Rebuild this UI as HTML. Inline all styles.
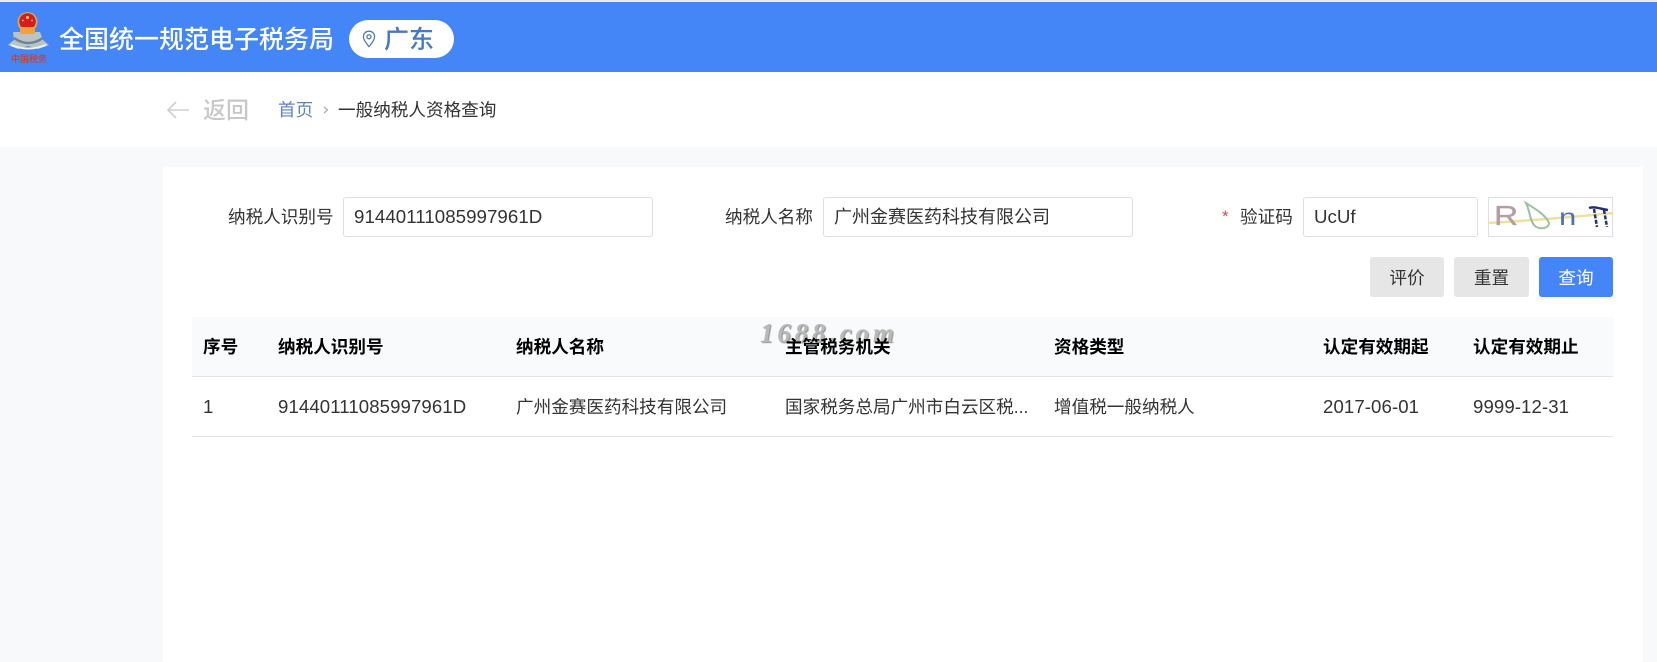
<!DOCTYPE html>
<html lang="zh-CN">
<head>
<meta charset="utf-8">
<title>一般纳税人资格查询</title>
<style>
html,body{margin:0;padding:0;}
body{position:relative;width:1657px;height:662px;overflow:hidden;background:#f8f9fa;font-family:"Liberation Sans","Noto Sans CJK SC",sans-serif;color:#333;}
.a{position:absolute;white-space:nowrap;}
.t{font-size:17.6px;line-height:24px;height:24px;}
.th{font-size:17.6px;line-height:24px;height:24px;font-weight:700;color:#000;top:335px;}
.td{font-size:17.6px;line-height:24px;height:24px;color:#333;top:395px;}
.n{font-size:18.6px;letter-spacing:.1px;}
.inp{box-sizing:border-box;background:#fff;border:1px solid #dcdfe6;border-radius:3px;top:197px;height:40px;line-height:38px;padding-left:10px;font-size:18px;color:#333;}
.btn{top:257px;height:40px;width:74px;border-radius:3px;background:#e6e6e6;text-align:center;line-height:42px;font-size:17.6px;color:#333;}
</style>
</head>
<body>
<div class="a" style="left:0;top:0;width:1657px;height:2px;background:#e8eaee"></div>
<div class="a" style="left:0;top:2px;width:1657px;height:70px;background:#4486f7"></div>

<svg class="a" style="left:8px;top:12px" width="42" height="52" viewBox="0 0 42 52">
  <path d="M0 33 L6 28 L5 20 L32 20 L35 28 L41 33 L30 37 L20 34 L10 37 Z" fill="#b9c4c9"/>
  <path d="M3 33 Q20 40 38 33" fill="none" stroke="#eef2f3" stroke-width="2"/>
  <path d="M6 26 Q20 36 35 26" fill="none" stroke="#71838b" stroke-width="2.500"/>
  <circle cx="19.500" cy="10" r="10" fill="#d9a94a"/>
  <circle cx="19.500" cy="9.500" r="8.300" fill="#d61c22"/>
  <rect x="12" y="15" width="15" height="7" rx="1.500" fill="#eda43a"/>
  <circle cx="19.500" cy="5.500" r="1.500" fill="#ffd75a"/>
  <circle cx="15" cy="8.500" r=".9" fill="#ffd75a"/><circle cx="24" cy="8.500" r=".9" fill="#ffd75a"/>
  <text x="3" y="50" font-size="9" font-weight="500" fill="#d5392a" font-family="'Noto Sans CJK SC',sans-serif" textLength="36" lengthAdjust="spacingAndGlyphs">中国税务</text>
</svg>

<div class="a" style="left:59px;top:21px;font-size:25px;line-height:38px;color:#fff;font-weight:500">全国统一规范电子税务局</div>
<div class="a" style="left:349px;top:20px;width:105px;height:38px;border-radius:19px;background:#fff"></div>
<svg class="a" style="left:362px;top:30px" width="14" height="18" viewBox="0 0 14 18">
  <path d="M7 1.200 C3.600 1.200 1.400 3.700 1.400 6.800 C1.400 10.400 5 14.200 7 16.600 C9 14.200 12.600 10.400 12.600 6.800 C12.600 3.700 10.400 1.200 7 1.200 Z" fill="none" stroke="#4f7fb8" stroke-width="1.300"/>
  <circle cx="7" cy="6.800" r="2" fill="none" stroke="#4f7fb8" stroke-width="1.300"/>
</svg>
<div class="a" style="left:384px;top:21px;font-size:25px;line-height:38px;font-weight:500;color:#4479c4">广东</div>

<div class="a" style="left:0;top:72px;width:1657px;height:75px;background:#fff"></div>
<svg class="a" style="left:166px;top:100px" width="24" height="20" viewBox="0 0 24 20">
  <path d="M23 10 H2 M10 2 L2 10 L10 18" fill="none" stroke="#cfcfcf" stroke-width="1.600"/>
</svg>
<div class="a" style="left:203px;top:93px;font-size:23px;line-height:35px;color:#c8c8c8;font-weight:500">返回</div>
<div class="a t" style="left:278px;top:98px;color:#5b84be">首页</div>
<svg class="a" style="left:321px;top:103px" width="10" height="14" viewBox="0 0 10 14">
  <path d="M3 4 L6.500 7 L3 10" fill="none" stroke="#aaa" stroke-width="1.200"/>
</svg>
<div class="a t" style="left:338px;top:98px;color:#333">一般纳税人资格查询</div>

<div class="a" style="left:163px;top:167px;width:1480px;height:495px;background:#fff"></div>

<div class="a t" style="left:228px;top:205px">纳税人识别号</div>
<div class="a inp" style="left:343px;width:310px;font-size:18.7px;letter-spacing:.05px">91440111085997961D</div>
<div class="a t" style="left:725px;top:205px">纳税人名称</div>
<div class="a inp" style="left:823px;width:310px">广州金赛医药科技有限公司</div>
<div class="a" style="left:1222px;top:205px;font-size:17px;line-height:24px;color:#c9505a">*</div>
<div class="a t" style="left:1240px;top:205px">验证码</div>
<div class="a inp" style="left:1303px;width:175px;font-size:18.7px">UcUf</div>

<svg class="a" style="left:1488px;top:197px" width="125" height="40" viewBox="0 0 125 40">
  <rect x="0.500" y="0.500" width="124" height="39" fill="#fff" stroke="#dcdfe6"/>
  <path d="M0 26 C35 24 85 20 125 16" fill="none" stroke="#eee29a" stroke-width="2.500"/>
  <text transform="translate(6 28) scale(1.200 1)" font-size="28" fill="#b59ea3" stroke="#b59ea3" stroke-width=".3" font-family="'Liberation Sans',sans-serif">R</text>
  <path d="M38 6 C46 11 58 18 61 26 C61 32 50 33 46 28 C42 24 42 14 38 6 Z" fill="none" stroke="#9cc39f" stroke-width="2"/>
  <text transform="translate(71 28) scale(1.350 1)" font-size="23" fill="#4a6fc2" font-family="'Liberation Sans',sans-serif">n</text>
  <path d="M101 11 C106 9 113 12 120 13" fill="none" stroke="#27306e" stroke-width="2.500"/>
  <path d="M106 12 L109 30 M116 13 L119 30" fill="none" stroke="#27306e" stroke-width="2.500" stroke-dasharray="4 1.500"/>
</svg>

<div class="a btn" style="left:1370px">评价</div>
<div class="a btn" style="left:1454px;width:75px">重置</div>
<div class="a btn" style="left:1539px;background:#4486f7;color:#fff">查询</div>

<div class="a" style="left:192px;top:317px;width:1421px;height:59px;background:#f9fafb;border-bottom:1px solid #e3e3e3;box-sizing:content-box"></div>
<div class="a" style="left:192px;top:436px;width:1421px;height:1px;background:#e3e3e3"></div>

<div class="a" style="left:760px;top:316px;font-family:'Liberation Serif',serif;font-style:italic;font-weight:700;font-size:27px;line-height:34px;letter-spacing:3.800px;color:#b9b9b9;text-shadow:1px 1px 1px #8f8f8f">1688.com</div>

<div class="a th" style="left:203px">序号</div>
<div class="a th" style="left:278px">纳税人识别号</div>
<div class="a th" style="left:516px">纳税人名称</div>
<div class="a th" style="left:785px">主管税务机关</div>
<div class="a th" style="left:1054px">资格类型</div>
<div class="a th" style="left:1323px">认定有效期起</div>
<div class="a th" style="left:1473px">认定有效期止</div>

<div class="a td" style="left:203px;font-size:18.6px">1</div>
<div class="a td n" style="left:278px">91440111085997961D</div>
<div class="a td" style="left:516px">广州金赛医药科技有限公司</div>
<div class="a td" style="left:785px">国家税务总局广州市白云区税...</div>
<div class="a td" style="left:1054px">增值税一般纳税人</div>
<div class="a td n" style="left:1323px">2017-06-01</div>
<div class="a td n" style="left:1473px">9999-12-31</div>
</body>
</html>
